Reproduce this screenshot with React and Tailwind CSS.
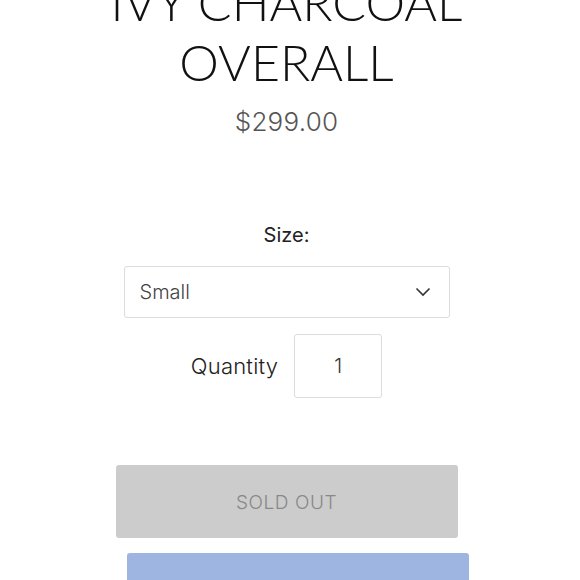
export default function App() {
  return (
    <div className="w-[580px] h-[580px] overflow-hidden bg-white" style={{ fontFamily: "Inter, 'Liberation Sans', sans-serif" }}>
      <div className="w-[573px] flex flex-col items-center">
        <h1 className="mt-[-28px] text-center text-[50px] leading-[60px] font-light tracking-normal text-[#111]" style={{ fontFamily: "Lato, sans-serif" }}>
          IVY CHARCOAL<br />OVERALL
        </h1>
        <div className="mt-[10px] text-[26px] leading-[40px] font-light text-[#555] tracking-[0.01em]">$299.00</div>
        <div className="mt-[79px] text-[20px] leading-[28px] text-[#222]">Size:</div>
        <div className="mt-[17px] w-[326px] h-[52px] border border-[#dcdcdc] rounded-[3px] flex items-center justify-between pl-[15px] pr-[18px]">
          <span className="text-[20px] font-light text-[#444]">Small</span>
          <svg width="16" height="10" viewBox="0 0 16 10" fill="none">
            <path d="M1.5 1.5 L8 8 L14.5 1.5" stroke="#333" strokeWidth="1.6" />
          </svg>
        </div>
        <div className="mt-[16px] flex items-center gap-[16px]">
          <span className="text-[22px] font-light text-[#222] tracking-[0.01em]">Quantity</span>
          <div className="w-[88px] h-[64px] border border-[#dcdcdc] rounded-[3px] flex items-center justify-center text-[20px] font-light text-[#333]">1</div>
        </div>
        <div className="mt-[67px] w-[342px] h-[73px] pt-[4px] bg-[#cccccc] rounded-[3px] flex items-center justify-center text-[19px] font-light tracking-[0.03em] text-[#888]">
          SOLD OUT
        </div>
        <div className="mt-[15px] ml-[22px] w-[342px] h-[40px] bg-[#9db5e0] rounded-t-[3px]"></div>
      </div>
    </div>
  );
}
